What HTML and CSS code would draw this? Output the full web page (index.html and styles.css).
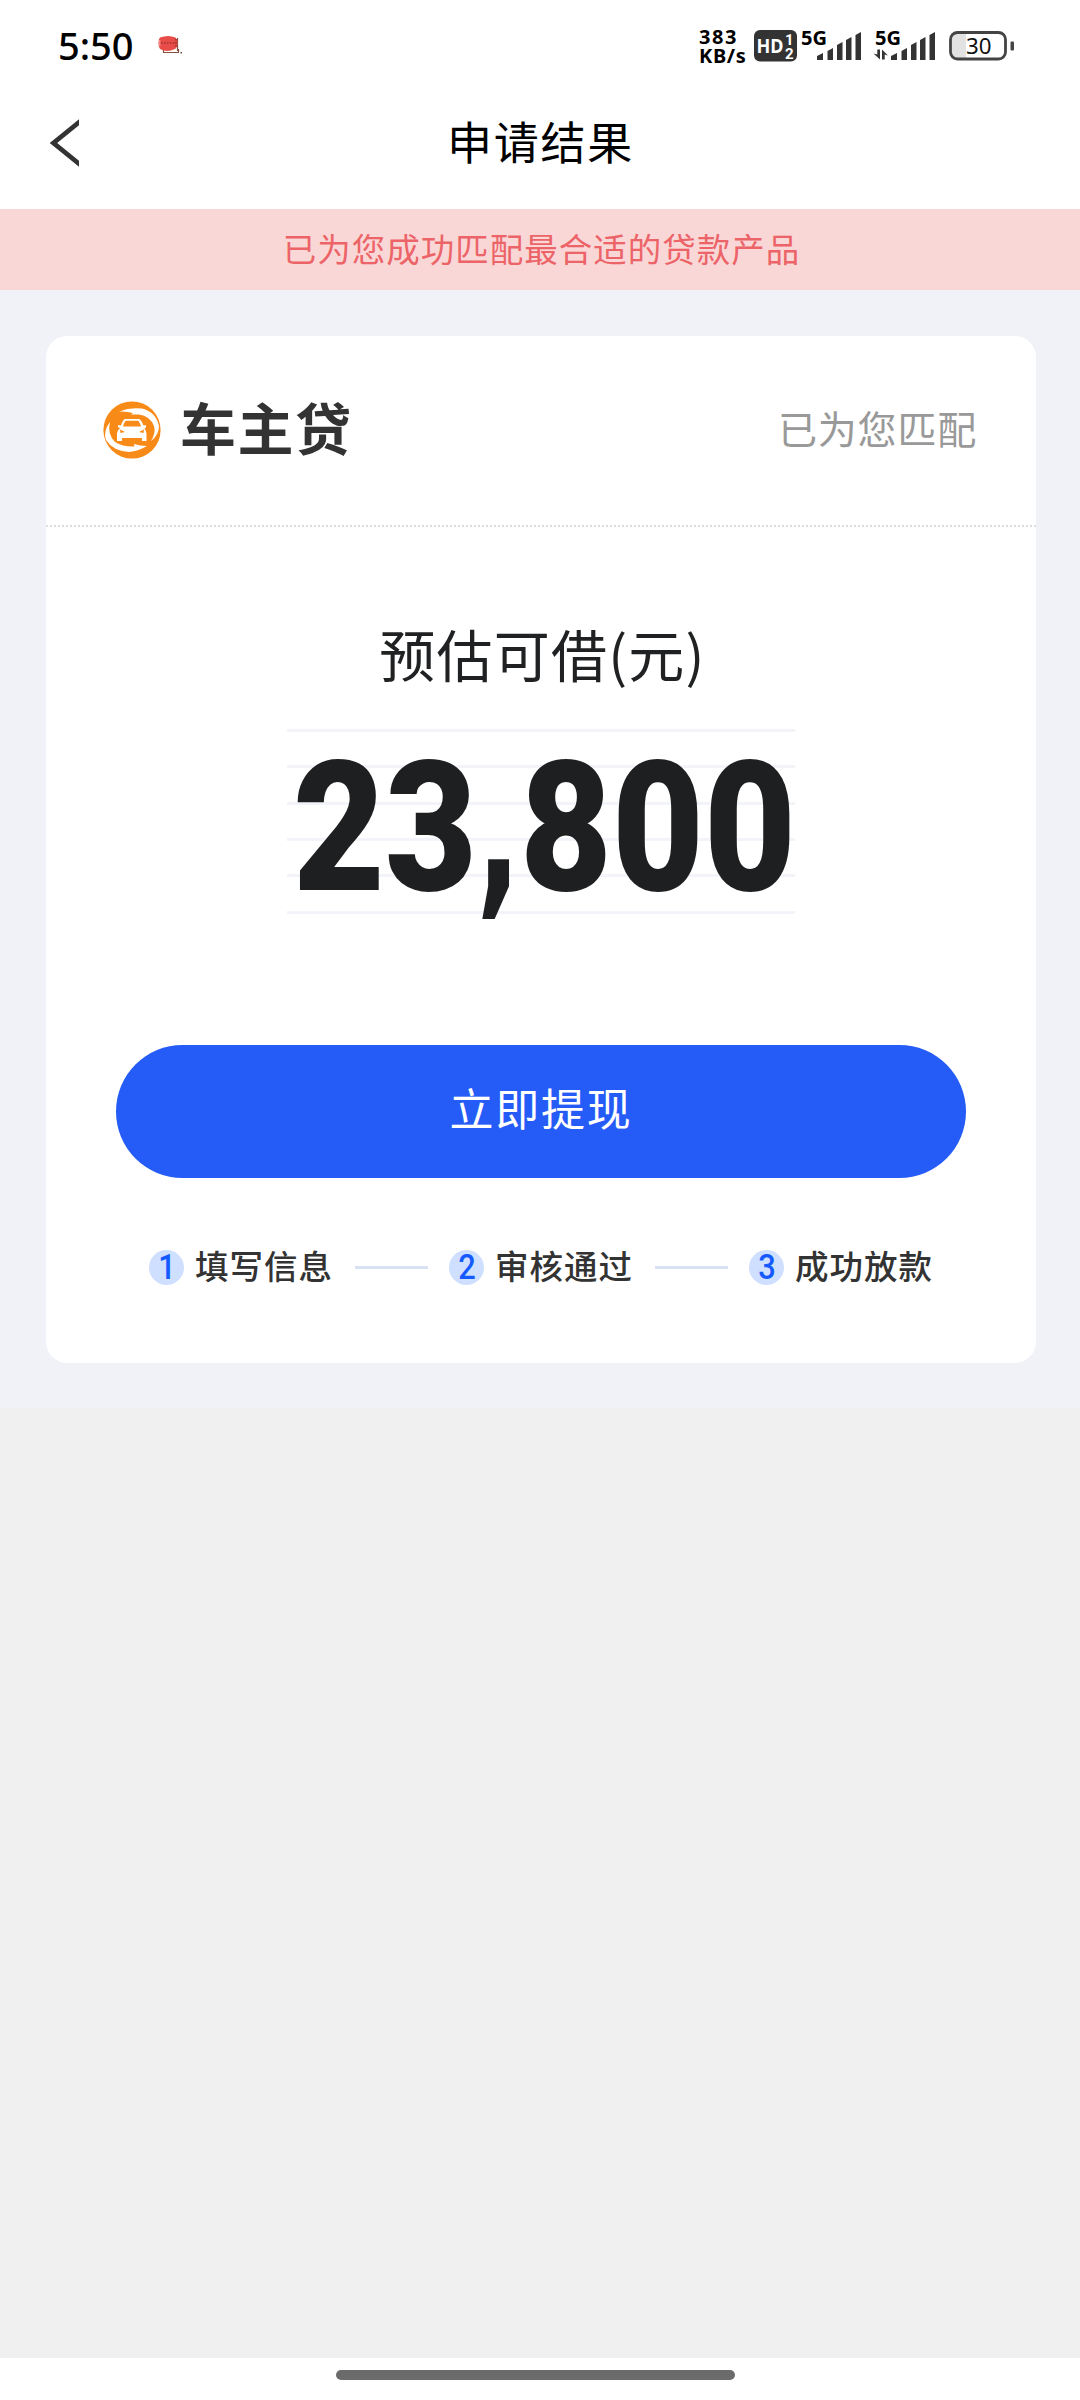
FILE: index.html
```html
<!DOCTYPE html>
<html lang="zh-CN">
<head>
<meta charset="utf-8">
<title>申请结果</title>
<link rel="stylesheet" href="styles.css">
</head>
<body>
<header class="top">
  <div class="status">
    <span class="time">5:50</span>
    <svg class="notice" width="26" height="20" viewBox="0 0 26 20">
      <path d="M5.500 13V16.500H20.500V13M19.500 2V15" fill="none" stroke="#87513f" stroke-width="1.200"/>
      <path d="M2 1.500Q10-1.500 17.500 1.500Q20 4 19.500 8Q19 12 17 13Q9 17 2 13Q0 10 .5 6Q.5 3 2 1.500Z" fill="#e84c48"/>
      <path d="M3 7H18M18 3V11" fill="none" stroke="#7d211f" stroke-width="1.100" stroke-dasharray="1.500 1.500"/>
      <path d="M1.800 4V10" stroke="#f8aaa6" stroke-width="1"/>
      <rect x="22.500" y="16" width="1.500" height="1.500" fill="#704d3b"/>
    </svg>
    <div class="speed"><span class="speed-value">383</span><span>KB/s</span></div>
    <svg class="hd" width="43" height="32" viewBox="0 0 43 32">
      <rect width="43" height="31.500" rx="6" fill="#333"/>
      <text class="hd-label" x="2.500" y="23.300" textLength="27" lengthAdjust="spacingAndGlyphs">HD</text>
      <text class="hd-num" x="31" y="15">1</text>
      <text class="hd-num" x="31" y="28.500">2</text>
    </svg>
    <svg class="signal" width="62" height="34" viewBox="0 0 62 34">
      <text class="net" x="0" y="15.500" textLength="26" lengthAdjust="spacingAndGlyphs">5G</text>
      <path d="M16 31V27L22 24V31ZM26.500 31V22L32 19V31ZM36 31V16L41.500 13V31ZM45 31V11L50.500 8V31ZM54.500 31V6L60 3V31Z" fill="#333"/>
    </svg>
    <svg class="signal signal-data" width="62" height="34" viewBox="0 0 62 34">
      <text class="net" x="0" y="15.500" textLength="26" lengthAdjust="spacingAndGlyphs">5G</text>
      <path d="M16 31V27L22 24V31ZM26.500 31V22L32 19V31ZM36 31V16L41.500 13V31ZM45 31V11L50.500 8V31ZM54.500 31V6L60 3V31Z" fill="#333"/>
      <path d="M2.300 20.500H5V30.500L-1.500 24.500L2.300 25.500ZM7 30.500V20.500L13 26.500L9.700 25.500V30.500Z" fill="#333"/>
    </svg>
    <svg class="battery" width="66" height="30" viewBox="0 0 66 30">
      <rect x="3" y="3" width="14" height="24" fill="#e2e2e2"/>
      <rect x="1.500" y="1.500" width="55" height="26.500" rx="7" fill="none" stroke="#444" stroke-width="2.800"/>
      <rect x="61.500" y="10.500" width="3.500" height="9" rx="1" fill="#444"/>
      <text class="battery-num" x="17" y="22.500" textLength="25.500" lengthAdjust="spacingAndGlyphs">30</text>
    </svg>
  </div>
  <nav class="nav">
    <svg class="back" width="31" height="48" viewBox="0 0 31 48"><path d="M35 0L5.500 24L35 48" fill="none" stroke="#333" stroke-width="4.800"/></svg>
    <h1 class="title">申请结果</h1>
  </nav>
</header>
<div class="banner">已为您成功匹配最合适的贷款产品</div>
<main class="main">
  <section class="card">
    <div class="product">
      <svg class="logo" width="58" height="58" viewBox="0 0 58 58">
        <circle cx="29" cy="29" r="28.600" fill="#f88a18"/>
        <path d="M16 10.500Q27 6 39 7.500Q53 11 56 25Q56 34 48 40Q53 32 51 25Q47 15 36 13.500L28 13.500L30 12Q23 10 16 10.500Z" fill="#fff"/>
        <path d="M7 21Q0 30 3 39Q10 50 26 51Q36 50 44 45Q37 45 31 43L31.500 45.500Q20 46 12 41Q4 33 7 21Z" fill="#fff"/>
        <path d="M22 18H36Q38 18.500 40.500 24.500L43 24V26.500L41.500 27.500Q43.500 30 43.500 33V40H39V37H19V40H14V33Q14 29.500 17 27.500L15 26V24L18 24.500Q20 18.500 22 18Z" fill="#fff"/>
        <path d="M23 19.800H35Q36.500 20.500 38 25.500H20Q21.500 20.500 23 19.800Z" fill="#f88a18"/>
        <path d="M17 28.500L22 31L17.500 32ZM41 28.500L36 31L40.500 32Z" fill="#f88a18"/>
      </svg>
      <h2 class="product-name">车主贷</h2>
      <span class="matched">已为您匹配</span>
    </div>
    <div class="dots"></div>
    <p class="caption">预估可借(元)</p>
    <div class="amount"><span class="digits lead">23</span><span class="comma">,</span><span class="digits">800</span></div>
    <button class="cta">立即提现</button>
    <ol class="steps">
      <li class="step"><b class="num"><span class="num-text">1</span></b><span class="step-name">填写信息</span></li>
      <li class="rule"></li>
      <li class="step"><b class="num"><span class="num-text">2</span></b><span class="step-name">审核通过</span></li>
      <li class="rule"></li>
      <li class="step"><b class="num"><span class="num-text">3</span></b><span class="step-name">成功放款</span></li>
    </ol>
  </section>
</main>
<footer class="home"><div class="home-bar"></div></footer>
</body>
</html>
```
FILE: styles.css
```css
* { box-sizing: border-box; margin: 0; padding: 0; }
body {
  display: flex;
  flex-direction: column;
  width: 1080px;
  height: 2400px;
  background: #f0f0f0;
  font-family: "Noto Sans CJK SC", sans-serif;
  overflow: hidden;
}
.top { height: 209px; background: #fff; }
.status {
  display: flex;
  align-items: flex-start;
  height: 92px;
  padding: 28px 0 0 58px;
}
.time {
  width: 100px;
  font: 500 38px/34px "Noto Sans", sans-serif;
  color: #000;
}
.notice { margin-top: 8px; }
.speed {
  display: flex;
  flex-direction: column;
  width: 55px;
  margin-left: 515px;
  font: 700 20px/18.500px "Noto Sans", sans-serif;
  letter-spacing: .6px;
  color: #000;
}
.speed-value { letter-spacing: 1.500px; }
.hd { margin-top: 2px; }
.hd-label { font: 700 20px "Noto Sans", sans-serif; fill: #fff; }
.hd-num { font: 700 15px Roboto, sans-serif; fill: #fff; }
.signal { margin: 1px 0 0 4px; overflow: visible; }
.signal-data { margin-left: 12px; }
.net { font: 700 20px "Noto Sans", sans-serif; fill: #000; }
.battery { margin: 3px 0 0 12px; }
.battery-num { font: 400 22.500px "Noto Sans", sans-serif; fill: #111; }
.nav {
  display: grid;
  grid-template-columns: 31px 1fr 31px;
  align-items: center;
  height: 102px;
  padding: 0 48px;
}
.title {
  text-align: center;
  font-size: 45px;
  font-weight: 400;
  line-height: 66px;
  padding-bottom: 4px;
  letter-spacing: 1.700px;
  text-indent: 1px;
  color: #000;
}
.banner {
  height: 81px;
  background: #fad7d7;
  color: #ec6468;
  font-size: 33.500px;
  line-height: 78px;
  letter-spacing: 1px;
  text-indent: 3px;
  text-align: center;
}
.main { height: 1118px; padding: 46px 44px 0 46px; background: #f0f2f8; }
.card { height: 1027px; border-radius: 21px; background: #fff; }
.product {
  display: flex;
  align-items: center;
  height: 189px;
  padding: 0 59px 1px 57px;
}
.product-name {
  margin-left: 19px;
  padding-bottom: 8px;
  font-size: 56px;
  font-weight: 700;
  line-height: 80px;
  letter-spacing: 1.500px;
  color: #333;
}
.matched { margin-left: auto; padding-bottom: 6px; font-size: 39px; line-height: 56px; letter-spacing: .8px; color: #999; }
.dots {
  height: 2px;
  background: repeating-linear-gradient(90deg, #ddd 0 2px, #fff 2px 4px);
}
.caption {
  padding-top: 84px;
  height: 202px;
  font-size: 56px;
  line-height: 84px;
  letter-spacing: 1.200px;
  text-indent: 3px;
  text-align: center;
  color: #202122;
}
.amount {
  display: flex;
  width: 508px;
  height: 187px;
  margin: 0 auto;
  padding-left: 6px;
  background: repeating-linear-gradient(#f3f3fa 0 3px, transparent 3px 36.330px);
  color: #1e1f21;
  font: 900 182px/198px Roboto, sans-serif;
}
.digits { transform: scaleX(.872); transform-origin: 0 50%; }
.lead { width: 183px; }
.comma {
  width: 44px;
  font: 700 180px/204px "DejaVu Sans", sans-serif;
  transform: scaleX(.66);
  transform-origin: 0 50%;
}
.cta {
  display: block;
  width: 850px;
  height: 133px;
  margin: 129px auto 0;
  border: 0;
  border-radius: 67px;
  background: #255bf6;
  color: #fff;
  font: 400 44px/64px "Noto Sans CJK SC", sans-serif;
  letter-spacing: 1.800px;
  padding-bottom: 9px;
}
.steps {
  display: flex;
  align-items: center;
  height: 36px;
  margin: 71px 0 0 103px;
  list-style: none;
}
.step { display: flex; align-items: center; width: 206px; }
.num {
  width: 35px;
  height: 35px;
  border-radius: 50%;
  background: #cfdfff;
  color: #145aff;
  font: 500 35px/35px Roboto, sans-serif;
  text-align: center;
}
.num-text { display: inline-block; transform: scaleX(.88); }
.step-name {
  margin-left: 11px;
  padding-bottom: 4px;
  font-size: 33.500px;
  font-weight: 500;
  line-height: 36px;
  letter-spacing: 1px;
  white-space: nowrap;
  color: #333;
}
.rule { width: 73px; height: 3px; margin-right: 21px; background: #d8e2f4; }
.home {
  display: flex;
  justify-content: center;
  height: 42px;
  margin-top: auto;
  padding: 12px 9px 0 0;
  background: #fff;
}
.home-bar { width: 399px; height: 10px; border-radius: 5px; background: #6b6b6b; }
```
